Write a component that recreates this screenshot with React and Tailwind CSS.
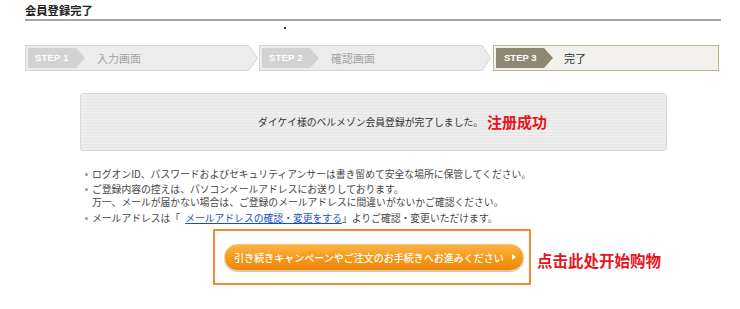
import React from "react";

const jp = { fontFamily: '"Noto Sans CJK JP", "Noto Sans", sans-serif' };
const sc = { fontFamily: '"Noto Sans CJK SC", "Noto Sans", sans-serif' };
const ar = { fontFamily: '"Liberation Sans", Arial, sans-serif' };

function ArrowStep({ width, label, text }) {
  return (
    <div className="relative h-[26px] flex items-center" style={{ width }}>
      <svg className="absolute inset-0" width={width} height="26" viewBox={`0 0 ${width} 26`}>
        <polygon
          points={`0.5,0.5 ${width - 9},0.5 ${width - 0.5},13 ${width - 9},25.5 0.5,25.5`}
          fill="#ececec"
          stroke="#d6d6d6"
        />
      </svg>
      <div className="relative ml-[3px] h-[20px] w-[57px] bg-[#d2d2d2] [clip-path:polygon(0_0,48px_0,57px_50%,48px_100%,0_100%)] flex items-center pl-[7px]">
        <span className="text-[9.5px] font-bold text-white tracking-[0.2px]" style={ar}>{label}</span>
      </div>
      <span className="relative ml-[12px] text-[11px] text-[#a3a3a3]" style={jp}>{text}</span>
    </div>
  );
}

export default function App() {
  return (
    <div className="w-[740px] h-[309px] bg-white relative overflow-hidden" style={jp}>
      <div className="pl-[25px] pr-[19px]">
        <div className="pt-[4px] pb-[2px] border-b-2 border-[#a5a5a5] text-[11.3px] font-bold text-[#222] leading-[13px]">
          会員登録完了
        </div>
        <div className="h-[24px] pt-[6px]">
          <div className="ml-[259px] w-[2px] h-[2px] bg-[#333]"></div>
        </div>
        <div className="flex items-center">
          <ArrowStep width={233} label="STEP 1" text="入力画面" />
          <div className="w-[1px]" />
          <ArrowStep width={232} label="STEP 2" text="確認画面" />
          <div className="w-[2px]" />
          <div className="h-[26px] w-[226px] border border-[#bdb38a] bg-[#f2f1ed] flex items-center">
            <div className="ml-[2px] h-[20px] w-[57px] bg-[#8c8872] [clip-path:polygon(0_0,48px_0,57px_50%,48px_100%,0_100%)] flex items-center pl-[8px]">
              <span className="text-[9.5px] font-bold text-white" style={ar}>STEP 3</span>
            </div>
            <span className="ml-[11px] text-[11px] text-[#333]">完了</span>
          </div>
        </div>
        <div className="mt-[22px] ml-[55px] w-[587px] h-[58px] border border-[#d9d9d9] rounded-[3px] bg-[repeating-linear-gradient(180deg,#ededed_0px,#ededed_2px,#e6e6e6_2px,#e6e6e6_3px)] flex items-center justify-center">
          <span className="ml-[58px] text-[9.8px] text-[#333]">ダイケイ様のベルメゾン会員登録が完了しました。</span>
          <span className="text-[15px] font-bold text-[#e8141c] ml-[4px]" style={sc}>注册成功</span>
        </div>
        <ul className="mt-[17px] ml-[60px] text-[9.8px] text-[#444] leading-[13.5px]">
          <li className="flex">
            <span className="w-[7px] shrink-0 pt-[5px]"><span className="block w-[3px] h-[3px] rounded-full bg-[#999]"></span></span>
            <span>ログオンID、パスワードおよびセキュリティアンサーは書き留めて安全な場所に保管してください。</span>
          </li>
          <li className="flex mt-[1px]">
            <span className="w-[7px] shrink-0 pt-[5px]"><span className="block w-[3px] h-[3px] rounded-full bg-[#999]"></span></span>
            <span>
              ご登録内容の控えは、パソコンメールアドレスにお送りしております。
              <br />
              万一、メールが届かない場合は、ご登録のメールアドレスに間違いがないかご確認ください。
            </span>
          </li>
          <li className="flex mt-[2px]">
            <span className="w-[7px] shrink-0 pt-[5px]"><span className="block w-[3px] h-[3px] rounded-full bg-[#999]"></span></span>
            <span>
              メールアドレスは「<span className="inline-block w-[5px]"></span>
              <a className="text-[#1a4fc4] underline">メールアドレスの確認・変更をする</a>
              」よりご確認・変更いただけます。
            </span>
          </li>
        </ul>
        <div className="mt-[4px] flex items-center">
          <div className="ml-[188px] w-[318px] h-[56px] border-2 border-[#f6883a] flex items-center pl-[9px]">
            <div className="w-[300px] h-[27px] rounded-full bg-[linear-gradient(180deg,#fbb545_0%,#f59a1c_50%,#ee8608_100%)] shadow-[0_1px_1px_rgba(0,0,0,0.25)] border border-[#f7c27a] flex items-center justify-center relative">
              <span className="text-[10px] text-white ml-[2px] font-medium">引き続きキャンペーンやご注文のお手続きへお進みください</span>
              <svg className="ml-[8px]" width="4" height="6" viewBox="0 0 4 6"><polygon points="0,0 4,3 0,6" fill="#fff" /></svg>
            </div>
          </div>
          <span className="ml-[6px] mt-[8px] text-[15.5px] font-bold text-[#e8141c]" style={sc}>点击此处开始购物</span>
        </div>
      </div>
    </div>
  );
}
